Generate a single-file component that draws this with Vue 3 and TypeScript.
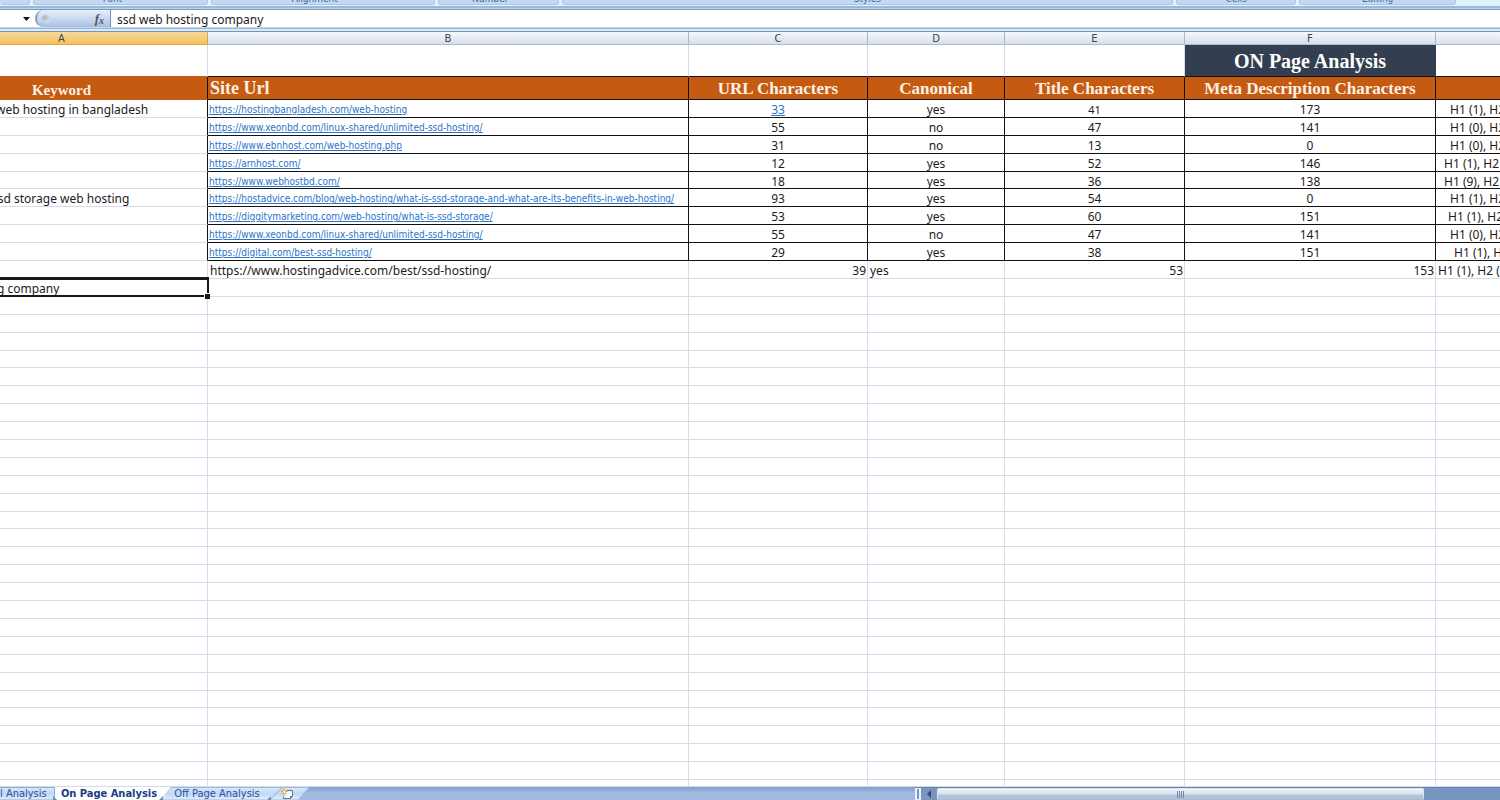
<script setup lang="ts">
interface Row {
  keyword?: string
  url?: string
  chars?: number
  canonical?: string
  title?: number
  meta?: number
  tags?: string
  linkChars?: boolean
  smallTitle?: boolean
}

const groups = [
  { label: '', cls: 'g-clip' },
  { label: 'Font', cls: 'g-font' },
  { label: 'Alignment', cls: 'g-align' },
  { label: 'Number', cls: 'g-number' },
  { label: 'Styles', cls: 'g-styles' },
  { label: 'Cells', cls: 'g-cells' },
  { label: 'Editing', cls: 'g-editing' },
]

const columns = ['A', 'B', 'C', 'D', 'E', 'F', '']
const headings = ['Keyword', 'Site Url', 'URL Characters', 'Canonical', 'Title Characters', 'Meta Description Characters', '']

const rows: Row[] = [
  { keyword: 'web hosting in bangladesh', url: 'https://hostingbangladesh.com/web-hosting', chars: 33, canonical: 'yes', title: 41, meta: 173, tags: 'H1 (1), H2', linkChars: true, smallTitle: true },
  { url: 'https://www.xeonbd.com/linux-shared/unlimited-ssd-hosting/', chars: 55, canonical: 'no', title: 47, meta: 141, tags: 'H1 (0), H2' },
  { url: 'https://www.ebnhost.com/web-hosting.php', chars: 31, canonical: 'no', title: 13, meta: 0, tags: 'H1 (0), H2' },
  { url: 'https://arnhost.com/', chars: 12, canonical: 'yes', title: 52, meta: 146, tags: 'H1 (1), H2' },
  { url: 'https://www.webhostbd.com/', chars: 18, canonical: 'yes', title: 36, meta: 138, tags: 'H1 (9), H2' },
  { keyword: 'ssd storage web hosting', url: 'https://hostadvice.com/blog/web-hosting/what-is-ssd-storage-and-what-are-its-benefits-in-web-hosting/', chars: 93, canonical: 'yes', title: 54, meta: 0, tags: 'H1 (1), H2' },
  { url: 'https://diggitymarketing.com/web-hosting/what-is-ssd-storage/', chars: 53, canonical: 'yes', title: 60, meta: 151, tags: 'H1 (1), H2' },
  { url: 'https://www.xeonbd.com/linux-shared/unlimited-ssd-hosting/', chars: 55, canonical: 'no', title: 47, meta: 141, tags: 'H1 (0), H2' },
  { url: 'https://digital.com/best-ssd-hosting/', chars: 29, canonical: 'yes', title: 38, meta: 151, tags: 'H1 (1), H2' },
]
const blankRows = 28
</script>

<template>
  <main class="app">
    <div class="ribbon">
      <div v-for="g in groups" :key="g.cls" class="group" :class="g.cls"><span>{{ g.label }}</span></div>
    </div>

    <div class="formula">
      <button class="namebox" aria-label="Name box list">
        <svg width="7" height="4" viewBox="0 0 7 4"><path d="M0 0H7L3.5 4Z" fill="#111" /></svg>
      </button>
      <div class="fxbar">
        <i class="knob"></i>
        <button class="fx" aria-label="Insert function">f<sub>x</sub></button>
      </div>
      <input class="entry" aria-label="Formula" value="ssd web hosting company" />
    </div>

    <div class="sheet">
      <table>
        <thead>
          <tr class="letters">
            <th v-for="(c, i) in columns" :key="i" scope="col" :class="{ active: i === 0 }">{{ c }}</th>
          </tr>
          <tr class="banner">
            <td></td><td></td><td></td><td></td><td></td>
            <th class="dark">ON Page Analysis</th>
            <td></td>
          </tr>
          <tr class="titles">
            <th v-for="(h, i) in headings" :key="i" scope="col" :class="'t' + i">{{ h }}</th>
          </tr>
        </thead>
        <tbody>
          <tr v-for="(r, i) in rows" :key="i" class="boxed">
            <td class="kw"><span :class="i === 0 ? 'cut-a' : 'cut-b'">{{ r.keyword }}</span></td>
            <td class="url"><a :href="r.url">{{ r.url }}</a></td>
            <td class="mid"><a v-if="r.linkChars" href="#">{{ r.chars }}</a><template v-else>{{ r.chars }}</template></td>
            <td class="mid">{{ r.canonical }}</td>
            <td class="mid" :class="{ small: r.smallTitle }">{{ r.title }}</td>
            <td class="mid">{{ r.meta }}</td>
            <td class="tags" :class="'tag' + i">{{ r.tags }}</td>
          </tr>
          <tr>
            <td></td>
            <td class="plain">https://www.hostingadvice.com/best/ssd-hosting/</td>
            <td class="num">39</td>
            <td class="plain">yes</td>
            <td class="num">53</td>
            <td class="num">153</td>
            <td class="plain">H1 (1), H2 (1</td>
          </tr>
          <tr>
            <td class="selected"><div class="kw"><span class="cut-c">ssd web hosting company</span></div><i class="handle"></i></td>
            <td v-for="n in 6" :key="n"></td>
          </tr>
          <tr v-for="n in blankRows" :key="'b' + n">
            <td v-for="m in 7" :key="m"></td>
          </tr>
        </tbody>
      </table>
    </div>

    <footer class="bottom">
      <nav class="tabs" aria-label="Sheets">
        <svg class="tabart" width="310" height="13" viewBox="0 0 310 13">
          <defs>
            <linearGradient id="tab" x1="0" y1="0" x2="0" y2="1">
              <stop offset="0" stop-color="#d9e8f8" /><stop offset=".5" stop-color="#c0d8f4" /><stop offset="1" stop-color="#e2effc" />
            </linearGradient>
          </defs>
          <path d="M270 13L282 0.5H309L298 13Z" fill="url(#tab)" stroke="#9db8da" />
          <path d="M158 13L171 0.5H282L270 13Z" fill="url(#tab)" stroke="#9db8da" />
          <path d="M-1 0.5H54.500V13H-1Z" fill="url(#tab)" stroke="#8caace" />
          <path d="M55 0H171L160 13H57L55 11Z" fill="#fff" />
          <path d="M159 13L163 9V13ZM267 13L271 9V13ZM53 13V9L57 13Z" fill="#6f8fb8" />
          <path d="M285.500 3.500H292.500V9.500L290 11.500H283.500V9.500H285.500Z" fill="#f5f9fd" />
          <path d="M287 3.500H292.500V9.500L290.500 11.500H283.500V9.500M290.500 11.500V9.500H292.500" fill="none" stroke="#5f7594" />
          <path d="M284 1.500V8M281 4.500H287.500M282 2.500L286.500 7M286.500 2.500L282 7" fill="none" stroke="#e8982c" />
          <circle cx="284.200" cy="4.700" r="1.300" fill="#fff0c0" />
        </svg>
        <button class="tab first">l Analysis</button>
        <button class="tab current">On Page Analysis</button>
        <button class="tab">Off Page Analysis</button>
        <button class="new" aria-label="Insert worksheet"></button>
      </nav>
      <div class="scroll">
        <i class="split"></i>
        <button class="left" aria-label="Scroll left">
          <svg width="4" height="8" viewBox="0 0 4 8"><path d="M4 0V8L0 4Z" fill="#384a6e" /></svg>
        </button>
        <div class="thumb"><i></i><i></i><i></i><i></i></div>
        <div class="track"></div>
      </div>
    </footer>
  </main>
</template>

<style>
body { margin: 0; }
</style>

<style scoped>
* { box-sizing: border-box; }
.app {
  display: flex; flex-direction: column; height: 100vh; overflow: hidden;
  background: #fff; color: #1c1c1c; font: 12px/19px "Noto Sans", "Open Sans", sans-serif;
}
button, input { margin: 0; padding: 0; border: 0; background: none; font: inherit; color: inherit; }

.ribbon {
  flex: none; display: grid; gap: 3px; height: 10px;
  grid-template-columns: 30fr 175fr 224fr 121fr 612fr 120fr 157fr 41fr;
  background: linear-gradient(#e0f3fd 0 6px, #9db9d3 6px 8px, #b9d4ec 8px 9px, #7898c0 9px);
}
.group {
  display: flex; align-items: flex-end; justify-content: center; height: 5px; min-width: 0; overflow: hidden;
  border: 1px solid #a9c8e6; border-top: 0; border-radius: 0 0 3px 3px; background: #c3d9f1;
  color: #3f6ab3; font: 10px/10px "DejaVu Sans Condensed", sans-serif;
}
.group span { flex: none; }
.g-clip { border-left: 0; }
.g-font, .g-align, .g-number { padding-right: 16px; }

.formula { flex: none; display: flex; height: 22px; padding-bottom: 5px;
  background: linear-gradient(#fff 0 17px, #c9d6e4 17px 18px, #9db7d3 18px 19px, #dce9f7 19px 21px, #7393bb 21px); }
.namebox { width: 35px; padding: 1px 5px 0 0; display: flex; align-items: center; justify-content: flex-end; }
.fxbar { width: 76px; display: flex; align-items: center; justify-content: space-between; padding: 0 6px 0 5px;
  border-left: 2px solid #7d9ac0; border-right: 1px solid #7493bb; border-radius: 9px 0 0 9px;
  background: linear-gradient(#e6effa, #c9daf0 50%, #a5c0e4); }
.knob { width: 8px; height: 8px; border-radius: 4px; background: radial-gradient(circle at 30% 30%, #a9b6c8, #e4edf7); }
.fx { font: italic bold 13px/15px "Liberation Serif", serif; color: #555; }
.fx sub { font-size: 10px; line-height: 8px; vertical-align: -1px; }
.entry { flex: 1; padding: 1px 0 0 6px; outline: 0; }

.sheet { flex: 1; min-height: 0; }
table { display: flex; flex-direction: column; height: 100%; }
thead { display: block; }
tbody { flex: 1; min-height: 0; display: grid; grid-template-rows: repeat(38, minmax(0, 1fr)) 7px; }
tr { display: grid; grid-template-rows: minmax(0, 1fr); grid-template-columns:
  minmax(0, 208fr) minmax(0, 481fr) minmax(0, 179fr) minmax(0, 137fr) minmax(0, 180fr) minmax(0, 251fr) minmax(0, 64fr); }
th, td { padding: 0; min-width: 0; min-height: 0; white-space: nowrap; border-right: 1px solid #d6daea; border-bottom: 1px solid #d6daea; }
tr > :last-child { border-right: 0; }
.letters { height: 13px; }
.letters th { font: 10px/13px "DejaVu Sans", sans-serif; color: #3a4654; background: linear-gradient(#f6f9fc, #d6dfea);
  border-right-color: #a3bad2; border-bottom-color: #a9bfd6; }
.letters th:first-child { padding-right: 84px; }
.letters .active { background: linear-gradient(#f8d99b, #f1c15f); border-color: #eaa03f; }
.banner { height: 32px; }
.banner > * { border-bottom-color: #111; }
.banner > :first-child { border-bottom-color: #c55a11; }
.banner .dark { background: #333f50; color: #fff; border-right-color: #333f50; font: bold 20px/33px "Liberation Serif", serif; }
.titles { height: 23px; }
.titles th { background: #c55a11; color: #fdf1e6; border-color: #111; font: bold 17px/23px "Liberation Serif", serif; }
.titles .t0 { padding: 3px 84px 0 0; border-bottom-color: #c55a11; font-size: 15px; line-height: 20px; }
.titles .t1 { text-align: left; padding-left: 2px; font-size: 18px; }

.boxed td { border-color: #111; }
.boxed .kw { border-bottom-color: #d6daea; }
.kw { overflow: hidden; display: flex; }
a { color: #2a73c8; }
.url { padding-left: 1px; font: 10px/20px "DejaVu Sans Condensed", sans-serif; }
.mid { text-align: center; }
.mid.small { font-size: 11px; }
.num { text-align: right; padding-right: 1px; }
.plain { padding-left: 2px; }
.tags { padding-left: 14px; }
.tag3, .tag4 { padding-left: 8px; }
.tag6 { padding-left: 12px; }
.tag8 { padding-left: 18px; }
.cut-a { margin-left: -4px; }
.cut-b { margin-left: -8px; }
.cut-c { margin-left: -87px; }
.selected { position: relative; }
.selected::after { content: ""; position: absolute; inset: -2px -2px -1px 0; border: solid #1a1a14; border-width: 3px 2px 2px 0; }
.handle { position: absolute; z-index: 1; right: -3px; bottom: -3px; width: 6px; height: 6px; background: #1a1a14; border: solid #fff; border-width: 1px 0 0 1px; }

.bottom { flex: none; display: flex; height: 13px; background: linear-gradient(#7f9fcd, #a2b9e0 6px); }
.tabs { position: relative; flex: 915; min-width: 0; display: flex; font: 11px/14px "DejaVu Sans Condensed", sans-serif; color: #26519a; }
.tabart { position: absolute; left: 0; top: 0; }
.tab, .new { position: relative; }
.tab { height: 14px; white-space: nowrap; }
.tab.first { width: 54px; text-align: left; }
.tab.current { width: 110px; font-weight: bold; color: #16407f; }
.tab:nth-of-type(3) { width: 106px; }
.new { width: 30px; }
.scroll { flex: 585; display: flex; background: #7896c0; border-top: 1px solid #6384b0; }
.split { width: 6px; border: solid #eaf3fb; border-width: 1px 2px; background: #7896c0; }
.left { width: 16px; display: flex; align-items: center; justify-content: center; }
.thumb { flex: 487; display: flex; align-items: center; justify-content: center; gap: 1px; border: 1px solid #dce6f1; border-bottom: 0; border-radius: 2px;
  background: linear-gradient(#eef2f8, #dbe2ee 5px, #b4c4da 6px, #a9bdd5); }
.thumb i { width: 1px; height: 7px; background: #76879f; }
.track { flex: 76; }
</style>
